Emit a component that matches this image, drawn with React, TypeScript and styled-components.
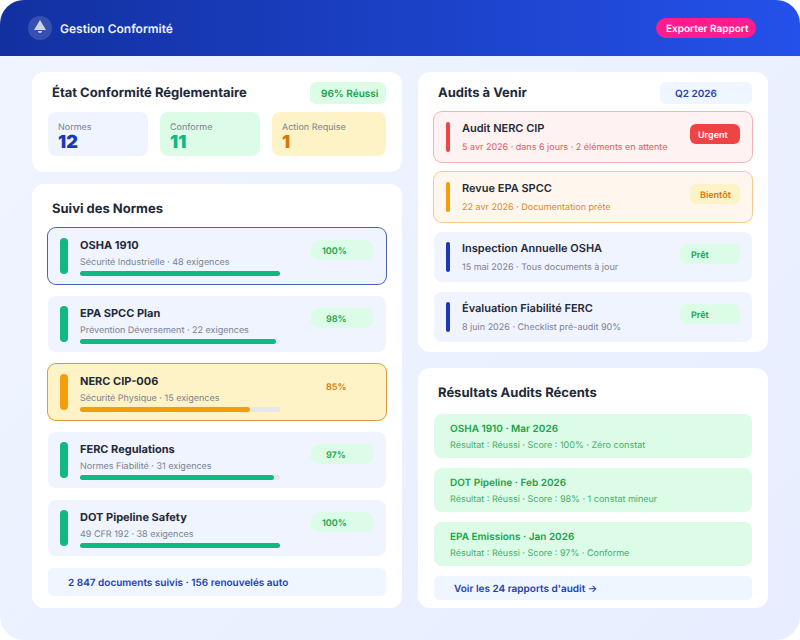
import React from "react";
import styled, { createGlobalStyle } from "styled-components";

type Tone = "green" | "amber" | "red" | "blue";

const fill: Record<Tone, string> = {
  green: "#dcfce7",
  amber: "#fef3c7",
  red: "#ef4444",
  blue: "#eff6ff",
};
const ink: Record<Tone, string> = {
  green: "#16a34a",
  amber: "#d97706",
  red: "#ffffff",
  blue: "#1e40af",
};

const Global = createGlobalStyle`
  *, *::before, *::after { box-sizing: border-box; }
  body { margin: 0; background: #ffffff; font-family: Inter, sans-serif; color: #1f2937; text-rendering: geometricPrecision; }
  h1, h2, h3, p { margin: 0; }
  ul { margin: 0; padding: 0; list-style: none; }
`;

const Frame = styled.div`
  min-height: 100vh;
  border-radius: 24px;
  overflow: hidden;
  background: linear-gradient(135deg, #f0f4ff, #e8eeff);
`;

const Header = styled.header`
  display: flex;
  align-items: center;
  gap: 8px;
  height: 56px;
  padding: 0 44px 0 28px;
  background: linear-gradient(90deg, #1230a0, #2451ea);
`;

const AppTitle = styled.h1`
  flex: 1;
  height: 16px;
  font-size: 12px;
  line-height: 18px;
  font-weight: 600;
  color: #eef2ff;
`;

const ExportButton = styled.button`
  min-width: 100px;
  height: 20px;
  padding: 0 0 0 10px;
  border: 0;
  border-radius: 10px;
  background: #ff1d8e;
  color: #ffffff;
  font: 600 10px/22px Inter, sans-serif;
  text-rendering: inherit;
  text-align: left;
  white-space: nowrap;
  cursor: pointer;
`;

const Main = styled.main`
  display: grid;
  grid-template-columns: 370fr 350fr;
  gap: 16px;
  padding: 16px 32px 32px;
`;

const Column = styled.div<{ $gap: number }>`
  display: flex;
  flex-direction: column;
  gap: ${(p) => p.$gap}px;
  min-width: 0;
`;

const Card = styled.section<{ $bottom: number }>`
  padding: 10px 16px ${(p) => p.$bottom}px;
  border-radius: 12px;
  background: #ffffff;
`;

const CardHead = styled.div<{ $after: number }>`
  display: flex;
  align-items: center;
  justify-content: space-between;
  margin-bottom: ${(p) => p.$after}px;
  padding-left: 4px;
`;

const CardTitle = styled.h2<{ $tall?: boolean }>`
  font-size: 13px;
  line-height: ${(p) => (p.$tall ? 30 : 20)}px;
  font-weight: 700;
`;

const HeadTag = styled.span<{ $tone: Tone; $width: number; $pad: number }>`
  width: ${(p) => p.$width}px;
  height: 22px;
  padding-left: ${(p) => p.$pad}px;
  border-radius: 6px;
  background: ${(p) => fill[p.$tone]};
  color: ${(p) => ink[p.$tone]};
  font-size: 10px;
  line-height: 24px;
  font-weight: 600;
  white-space: nowrap;
`;

const Stats = styled.div`
  display: grid;
  grid-template-columns: 100fr 100fr 114fr;
  gap: 12px;
`;

const Stat = styled.div<{ $bg: string }>`
  height: 44px;
  padding: 10px 10px 0;
  border-radius: 8px;
  background: ${(p) => p.$bg};
`;

const StatLabel = styled.p`
  font-size: 9px;
  line-height: 12px;
  color: #7b8190;
`;

const StatValue = styled.p<{ $color: string }>`
  font-size: 18px;
  line-height: 18px;
  font-weight: 900;
  color: ${(p) => p.$color};
`;

const List = styled.ul<{ $gap: number }>`
  display: flex;
  flex-direction: column;
  gap: ${(p) => p.$gap}px;
`;

const Row = styled.li<{ $bg: string; $edge?: string; $compact?: boolean }>`
  display: flex;
  gap: 12px;
  height: ${(p) => (p.$compact ? 50 : 56)}px;
  padding: 10px 12px;
  border-radius: 8px;
  background: ${(p) => p.$bg};
  box-shadow: ${(p) => (p.$edge ? `0 0 0 1px ${p.$edge}` : "none")};
`;

const Marker = styled.span<{ $color: string; $thin?: boolean }>`
  flex: none;
  width: ${(p) => (p.$thin ? 4 : 8)}px;
  border-radius: ${(p) => (p.$thin ? 2 : 4)}px;
  background: ${(p) => p.$color};
`;

const RowText = styled.div`
  flex: 1;
  min-width: 0;
  white-space: nowrap;
`;

const RowTitle = styled.h3<{ $heavy?: boolean }>`
  margin-bottom: ${(p) => (p.$heavy ? 5 : 8)}px;
  font-size: 11px;
  line-height: ${(p) => (p.$heavy ? 14 : 12)}px;
  font-weight: ${(p) => (p.$heavy ? 700 : 600)};
`;

const RowSub = styled.p<{ $color?: string }>`
  font-size: 9px;
  line-height: 12px;
  color: ${(p) => p.$color ?? "#7b8190"};
`;

const Track = styled.div`
  width: 200px;
  height: 5px;
  margin-top: 2px;
  border-radius: 3px;
  background: #e5e7eb;
`;

const Fill = styled.div<{ $color: string }>`
  height: 100%;
  border-radius: 3px;
  background: ${(p) => p.$color};
`;

const Pill = styled.span<{ $tone: Tone; $width: number; $pad: number; $round?: boolean }>`
  flex: none;
  width: ${(p) => p.$width}px;
  height: 20px;
  margin-top: 2px;
  padding-left: ${(p) => p.$pad}px;
  border-radius: ${(p) => (p.$round ? 10 : 6)}px;
  background: ${(p) => fill[p.$tone]};
  color: ${(p) => ink[p.$tone]};
  font-size: 9px;
  line-height: 24px;
  font-weight: 600;
`;

const Summary = styled.p`
  height: 28px;
  margin-top: 12px;
  padding-left: 20px;
  border-radius: 6px;
  background: #eff6ff;
  color: #1e40af;
  font-size: 10px;
  line-height: 30px;
  font-weight: 600;
`;

const Result = styled.li`
  height: 44px;
  padding: 8px 16px 0;
  border-radius: 8px;
  background: #dcfce7;
  color: #16a34a;
`;

const ResultTitle = styled.h3`
  margin-bottom: 4px;
  font-size: 10px;
  line-height: 14px;
  font-weight: 600;
`;

const AllLink = styled.a`
  display: block;
  height: 24px;
  margin-top: 10px;
  padding-left: 20px;
  border-radius: 6px;
  background: #eff6ff;
  color: #1e40af;
  font-size: 10px;
  line-height: 26px;
  font-weight: 600;
  text-decoration: none;
`;

const green = "#10b981";
const amber = "#f59e0b";

const norms = [
  { name: "OSHA 1910", sub: "Sécurité Industrielle · 48 exigences", pct: 100, edge: "#4a60bd" },
  { name: "EPA SPCC Plan", sub: "Prévention Déversement · 22 exigences", pct: 98 },
  { name: "NERC CIP-006", sub: "Sécurité Physique · 15 exigences", pct: 85, warn: true, edge: "#dc9a40" },
  { name: "FERC Regulations", sub: "Normes Fiabilité · 31 exigences", pct: 97 },
  { name: "DOT Pipeline Safety", sub: "49 CFR 192 · 38 exigences", pct: 100 },
];

const audits: {
  name: string; sub: string; tag: string; tone: Tone; width: number; pad: number;
  bg: string; bar: string; edge?: string; color?: string;
}[] = [
  { name: "Audit NERC CIP", sub: "5 avr 2026 · dans 6 jours · 2 éléments en attente", tag: "Urgent", tone: "red", width: 50, pad: 8, bg: "#fef2f2", bar: "#ef4444", edge: "#f2b3b5", color: "#e05a5f" },
  { name: "Revue EPA SPCC", sub: "22 avr 2026 · Documentation prête", tag: "Bientôt", tone: "amber", width: 50, pad: 10, bg: "#fff7ed", bar: "#f59e0b", edge: "#f5c88f", color: "#dc8a26" },
  { name: "Inspection Annuelle OSHA", sub: "15 mai 2026 · Tous documents à jour", tag: "Prêt", tone: "green", width: 60, pad: 11, bg: "#f0f4ff", bar: "#1a38b8" },
  { name: "Évaluation Fiabilité FERC", sub: "8 juin 2026 · Checklist pré-audit 90%", tag: "Prêt", tone: "green", width: 60, pad: 11, bg: "#f0f4ff", bar: "#1a38b8" },
];

const results = [
  ["OSHA 1910 · Mar 2026", "Résultat : Réussi · Score : 100% · Zéro constat"],
  ["DOT Pipeline · Feb 2026", "Résultat : Réussi · Score : 98% · 1 constat mineur"],
  ["EPA Emissions · Jan 2026", "Résultat : Réussi · Score : 97% · Conforme"],
];

const Logo = () => (
  <svg width="24" height="24" viewBox="0 0 24 24" aria-hidden="true">
    <circle cx="12" cy="12" r="12" fill="#fff" fillOpacity=".15" />
    <path d="M12 4 18 14H6Z" fill="#fff" fillOpacity=".75" />
    <path d="M10 15h4a2 2 0 0 1-4 0Z" fill="#fff" fillOpacity=".75" />
  </svg>
);

export default function App() {
  return (
    <Frame>
      <Global />
      <Header>
        <Logo />
        <AppTitle>Gestion Conformité</AppTitle>
        <ExportButton type="button">Exporter Rapport</ExportButton>
      </Header>
      <Main>
        <Column $gap={12}>
          <Card $bottom={16}>
            <CardHead $after={8}>
              <CardTitle>État Conformité Réglementaire</CardTitle>
              <HeadTag $tone="green" $width={76} $pad={11}>96% Réussi</HeadTag>
            </CardHead>
            <Stats>
              <Stat $bg="#f0f4ff">
                <StatLabel>Normes</StatLabel>
                <StatValue $color="#1a38b8">12</StatValue>
              </Stat>
              <Stat $bg="#dcfce7">
                <StatLabel>Conforme</StatLabel>
                <StatValue $color={green}>11</StatValue>
              </Stat>
              <Stat $bg="#fef3c7">
                <StatLabel>Action Requise</StatLabel>
                <StatValue $color="#d97706">1</StatValue>
              </Stat>
            </Stats>
          </Card>
          <Card $bottom={12}>
            <CardHead $after={4}>
              <CardTitle $tall>Suivi des Normes</CardTitle>
            </CardHead>
            <List $gap={12}>
              {norms.map((n) => (
                <Row key={n.name} $bg={n.warn ? "#fef3c7" : "#f0f4ff"} $edge={n.edge}>
                  <Marker $color={n.warn ? amber : green} />
                  <RowText>
                    <RowTitle $heavy>{n.name}</RowTitle>
                    <RowSub>{n.sub}</RowSub>
                    <Track>
                      <Fill $color={n.warn ? amber : green} style={{ width: `${n.pct}%` }} />
                    </Track>
                  </RowText>
                  <Pill $tone={n.warn ? "amber" : "green"} $width={64} $pad={n.pct === 100 ? 12 : 16} $round>
                    {n.pct}%
                  </Pill>
                </Row>
              ))}
            </List>
            <Summary>2 847 documents suivis · 156 renouvelés auto</Summary>
          </Card>
        </Column>
        <Column $gap={16}>
          <Card $bottom={10}>
            <CardHead $after={8}>
              <CardTitle>Audits à Venir</CardTitle>
              <HeadTag $tone="blue" $width={92} $pad={15}>Q2 2026</HeadTag>
            </CardHead>
            <List $gap={10}>
              {audits.map((a) => (
                <Row key={a.name} $bg={a.bg} $edge={a.edge} $compact>
                  <Marker $color={a.bar} $thin />
                  <RowText>
                    <RowTitle>{a.name}</RowTitle>
                    <RowSub $color={a.color}>{a.sub}</RowSub>
                  </RowText>
                  <Pill $tone={a.tone} $width={a.width} $pad={a.pad}>{a.tag}</Pill>
                </Row>
              ))}
            </List>
          </Card>
          <Card $bottom={8}>
            <CardHead $after={6}>
              <CardTitle $tall>Résultats Audits Récents</CardTitle>
            </CardHead>
            <List $gap={10}>
              {results.map(([title, detail]) => (
                <Result key={title}>
                  <ResultTitle>{title}</ResultTitle>
                  <RowSub $color="#3fae6a">{detail}</RowSub>
                </Result>
              ))}
            </List>
            <AllLink href="#rapports">Voir les 24 rapports d'audit →</AllLink>
          </Card>
        </Column>
      </Main>
    </Frame>
  );
}
